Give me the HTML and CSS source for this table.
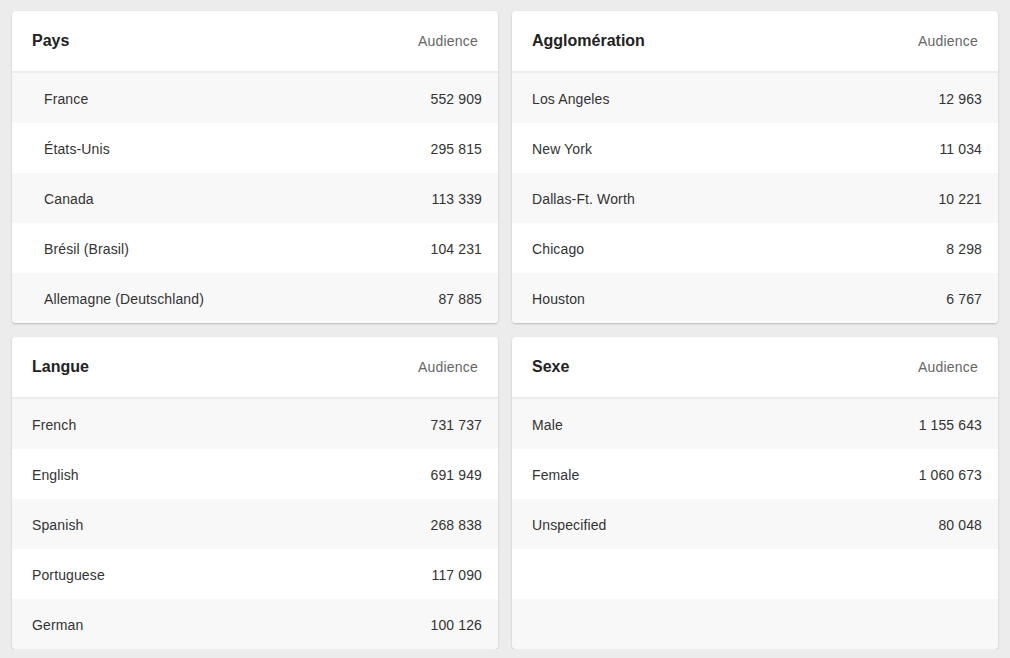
FILE: index.html
```html
<!DOCTYPE html>
<html lang="fr">
<head>
<meta charset="utf-8">
<link rel="stylesheet" href="styles.css">
</head>
<body>
<div class="grid">
  <section class="card">
    <header class="card-head"><h2>Pays</h2><span class="col">Audience</span></header>
    <div class="rows indented">
      <div class="row"><span>France</span><span>552 909</span></div>
      <div class="row"><span>États-Unis</span><span>295 815</span></div>
      <div class="row"><span>Canada</span><span>113 339</span></div>
      <div class="row"><span>Brésil (Brasil)</span><span>104 231</span></div>
      <div class="row"><span>Allemagne (Deutschland)</span><span>87 885</span></div>
    </div>
  </section>
  <section class="card">
    <header class="card-head"><h2>Agglomération</h2><span class="col">Audience</span></header>
    <div class="rows">
      <div class="row"><span>Los Angeles</span><span>12 963</span></div>
      <div class="row"><span>New York</span><span>11 034</span></div>
      <div class="row"><span>Dallas-Ft. Worth</span><span>10 221</span></div>
      <div class="row"><span>Chicago</span><span>8 298</span></div>
      <div class="row"><span>Houston</span><span>6 767</span></div>
    </div>
  </section>
  <section class="card">
    <header class="card-head"><h2>Langue</h2><span class="col">Audience</span></header>
    <div class="rows">
      <div class="row"><span>French</span><span>731 737</span></div>
      <div class="row"><span>English</span><span>691 949</span></div>
      <div class="row"><span>Spanish</span><span>268 838</span></div>
      <div class="row"><span>Portuguese</span><span>117 090</span></div>
      <div class="row"><span>German</span><span>100 126</span></div>
    </div>
  </section>
  <section class="card">
    <header class="card-head"><h2>Sexe</h2><span class="col">Audience</span></header>
    <div class="rows">
      <div class="row"><span>Male</span><span>1 155 643</span></div>
      <div class="row"><span>Female</span><span>1 060 673</span></div>
      <div class="row"><span>Unspecified</span><span>80 048</span></div>
      <div class="row"></div>
      <div class="row"></div>
    </div>
  </section>
</div>
</body>
</html>
```
FILE: styles.css
```css
* { box-sizing: border-box; }
html, body { margin: 0; padding: 0; }
body {
  background: #ececec;
  font-family: "Liberation Sans", Arial, sans-serif;
  color: #333;
}
.grid {
  display: grid;
  grid-template-columns: 486px 486px;
  column-gap: 14px;
  row-gap: 14px;
  padding: 11px 12px 0 12px;
}
.card {
  background: #fff;
  border-radius: 4px;
  box-shadow: 0 1px 2px rgba(0,0,0,0.22);
  overflow: hidden;
}
.card-head {
  height: 62px;
  border-bottom: 2px solid #ececec;
  display: flex;
  align-items: center;
  justify-content: space-between;
  padding: 0 20px 0 20px;
}
.card-head h2 {
  margin: 0;
  font-size: 16px;
  font-weight: bold;
  color: #222;
}
.col {
  font-size: 14px;
  letter-spacing: 0.2px;
  color: #666;
}
.rows { display: flex; flex-direction: column; }
.row {
  height: 50px;
  display: flex;
  align-items: center;
  justify-content: space-between;
  padding: 1px 16px 0 20px;
  font-size: 14px;
  letter-spacing: 0.12px;
  color: #333;
}
.rows.indented .row { padding-left: 32px; }
.row:nth-child(odd) { background: #f8f8f8; }
```
